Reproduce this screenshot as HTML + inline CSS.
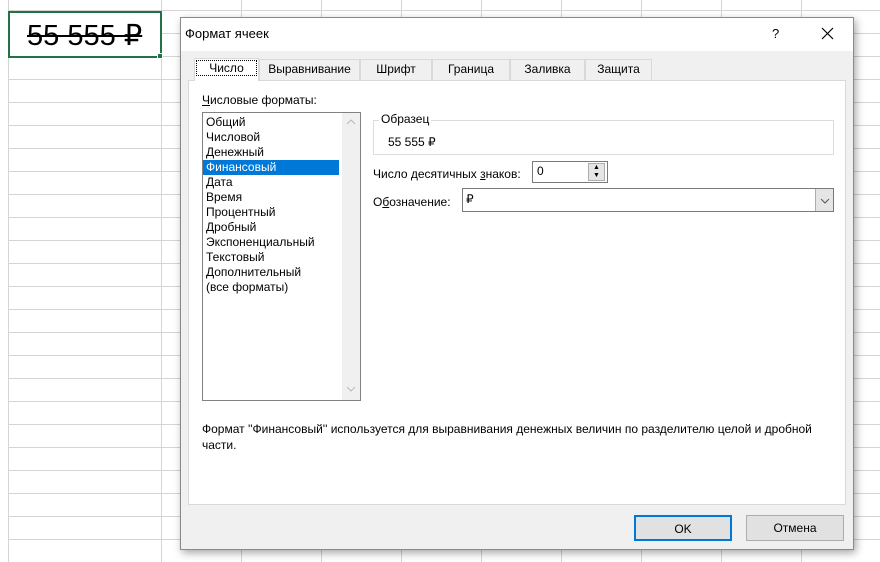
<!DOCTYPE html>
<html><head><meta charset="utf-8"><style>
*{box-sizing:border-box;margin:0;padding:0}
body{width:880px;height:562px;overflow:hidden;background:#fff;font-family:"Liberation Sans",sans-serif;font-size:12px;color:#000;position:relative}
.grid{position:absolute;left:0;top:0;width:880px;height:562px;
background-image:linear-gradient(to right,#d4d4d4 1px,transparent 1px),linear-gradient(to bottom,#d4d4d4 1px,transparent 1px);
background-size:80px 23px;background-position:1px 10px}
.rows{position:absolute;left:9px;top:0;width:152px;height:562px;background-color:#fff;
background-image:linear-gradient(to bottom,#d4d4d4 1px,transparent 1px);background-size:80px 23px;background-position:0 10px}
.a{position:absolute}
.dlg{position:absolute;left:180px;top:17px;width:674px;height:533px;background:#f0f0f0;border:1px solid #8a8a8a;box-shadow:2px 3px 8px rgba(0,0,0,.35)}
.title{position:absolute;left:0;top:0;width:672px;height:33px;background:#fff}
.tab{position:absolute;top:41px;height:21px;border:1px solid #d9d9d9;border-bottom:none;background:#f0f0f0;text-align:center;line-height:19px}
.panel{position:absolute;left:7px;top:62px;width:658px;height:425px;background:#fff;border:1px solid #d9d9d9}
.list div{height:15px;line-height:15px;padding-left:3px}
.btn{position:absolute;top:497px;height:26px;border:1px solid #adadad;background:#e1e1e1;text-align:center;line-height:24px}
</style></head><body>
<div class="grid"></div>
<div class="rows"></div>
<div class="a" style="left:0;top:0;width:9px;height:562px;background:#fff;border-right:1px solid #d4d4d4"></div>
<div class="a" style="left:8px;top:11px;width:154px;height:47px;background:#fff;border:2px solid #217346"></div>
<div class="a" style="left:157px;top:53px;width:6px;height:6px;background:#217346;border:1px solid #fff"></div>
<div class="a" style="left:27px;top:19px;font-size:29px;line-height:34px;text-decoration:line-through;">55 555 ₽</div>
<div class="dlg">
 <div class="title"></div>
 <div class="a" style="left:4px;top:8px;font-size:13px">Формат ячеек</div>
 <div class="a" style="left:591px;top:8px;font-size:13px">?</div>
 <svg class="a" style="left:640px;top:9px" width="13" height="13"><path d="M1 1L12 12M12 1L1 12" stroke="#000" stroke-width="1.2"/></svg>
 <div class="tab" style="left:13px;width:65px;top:40px;height:23px;background:#fff;z-index:2"><span style="border:1px dotted #000;padding:0 12px">Число</span></div>
 <div class="tab" style="left:78px;width:101px">Выравнивание</div>
 <div class="tab" style="left:179px;width:72px">Шрифт</div>
 <div class="tab" style="left:251px;width:78px">Граница</div>
 <div class="tab" style="left:329px;width:75px">Заливка</div>
 <div class="tab" style="left:404px;width:67px">Защита</div>
 <div class="panel">
  <div class="a" style="left:13px;top:12px"><u>Ч</u>исловые форматы:</div>
  <div class="a list" style="left:13px;top:31px;width:159px;height:289px;border:1px solid #828282">
   <div style="margin-top:2px">Общий</div><div>Числовой</div><div>Денежный</div>
   <div style="background:#0078d7;color:#fff;width:136px">Финансовый</div>
   <div>Дата</div><div>Время</div><div>Процентный</div><div>Дробный</div><div>Экспоненциальный</div><div>Текстовый</div><div>Дополнительный</div><div>(все форматы)</div>
   <div class="a" style="left:139px;top:0;width:18px;height:287px;background:#f0f0f0;padding:0"><svg class="a" style="left:4px;top:6px" width="10" height="6"><path d="M1 5L5 1L9 5" stroke="#bbb" fill="none"/></svg><svg class="a" style="left:4px;bottom:8px" width="10" height="6"><path d="M1 1L5 5L9 1" stroke="#bbb" fill="none"/></svg></div>
  </div>
  <div class="a" style="left:184px;top:39px;width:461px;height:35px;border:1px solid #dcdcdc"></div>
  <div class="a" style="left:190px;top:31px;background:#fff;padding:0 2px">Образец</div>
  <div class="a" style="left:199px;top:54px">55 555 ₽</div>
  <div class="a" style="left:184px;top:86px">Число десятичных <u>з</u>наков:</div>
  <div class="a" style="left:343px;top:80px;width:76px;height:22px;border:1px solid #7a7a7a;padding:2px 4px">0
   <div class="a" style="left:55px;top:1px;width:17px;height:18px;background:#e5e5e5;border:1px solid #adadad;font-size:7px;line-height:8px;text-align:center">▲<br>▼</div></div>
  <div class="a" style="left:184px;top:114px">О<u>б</u>означение:</div>
  <div class="a" style="left:273px;top:107px;width:372px;height:24px;border:1px solid #7a7a7a;padding:3px 3px">₽
   <div class="a" style="right:0;top:0;width:18px;height:22px;background:#e5e5e5;border-left:1px solid #adadad"><svg class="a" style="left:4px;top:9px" width="10" height="6"><path d="M1 1L5 5L9 1" stroke="#555" fill="none"/></svg></div></div>
  <div class="a" style="left:13px;top:340px;width:630px;line-height:16px">Формат ''Финансовый'' используется для выравнивания денежных величин по разделителю целой и дробной части.</div>
 </div>
 <div class="btn" style="left:453px;width:98px;border:2px solid #0078d7">OK</div>
 <div class="btn" style="left:565px;width:98px">Отмена</div>
</div>
</body></html>
